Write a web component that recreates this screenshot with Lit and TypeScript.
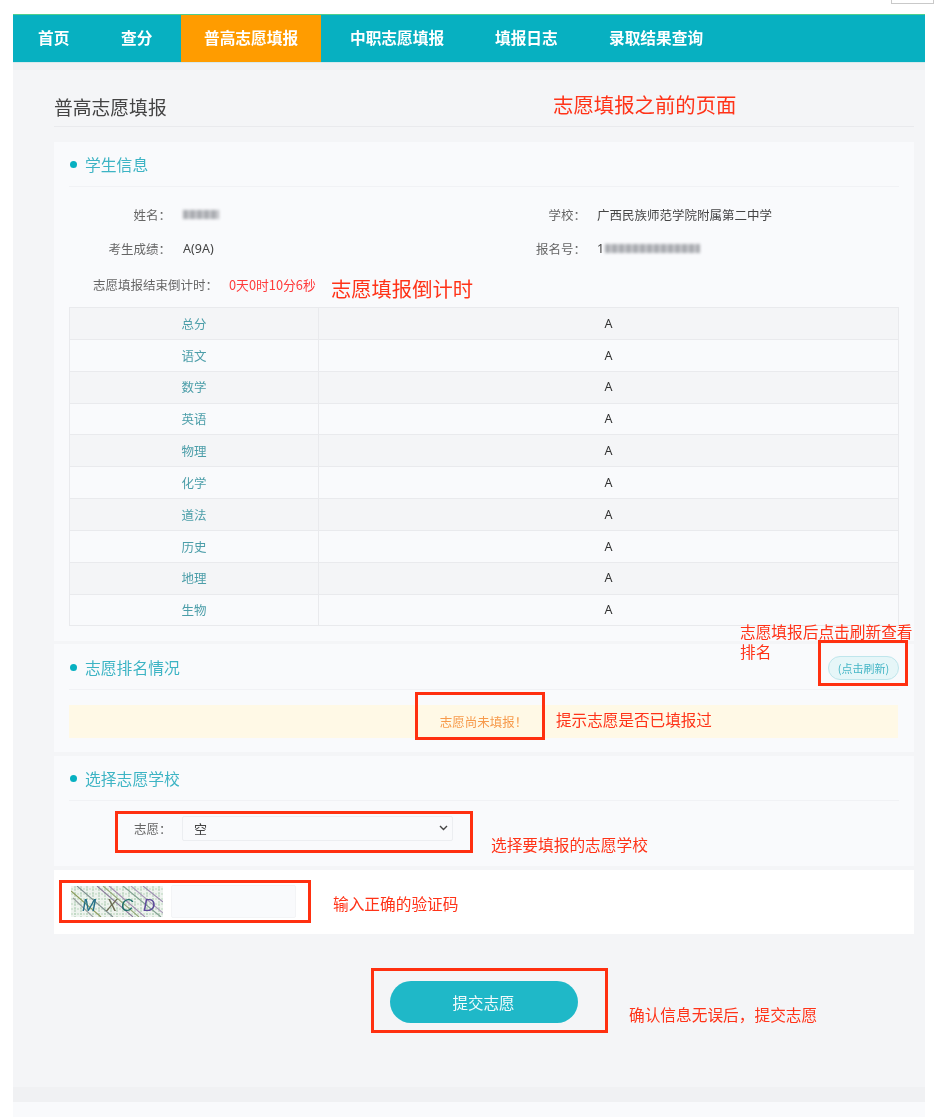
import { LitElement, html, css, svg } from "lit";
import { customElement } from "lit/decorators.js";

const NAV = [
  { t: "首页", w: 83, pad: 25 },
  { t: "查分", w: 85, pad: 25 },
  { t: "普高志愿填报", w: 140, pad: 23, active: true },
  { t: "中职志愿填报", w: 147, pad: 29 },
  { t: "填报日志", w: 114, pad: 27 },
  { t: "录取结果查询", w: 0, pad: 27 },
];
const SUBJECTS = ["总分", "语文", "数学", "英语", "物理", "化学", "道法", "历史", "地理", "生物"];

const NOTES = [
  { t: "志愿填报之前的页面", x: 553, y: 95, s: 20.4 },
  { t: "志愿填报倒计时", x: 331, y: 279, s: 20.3 },
  { t: "志愿填报后点击刷新查看", x: 740, y: 624, s: 15.7 },
  { t: "排名", x: 740, y: 644, s: 15.7 },
  { t: "提示志愿是否已填报过", x: 556, y: 712, s: 15.6 },
  { t: "选择要填报的志愿学校", x: 491, y: 837, s: 15.7 },
  { t: "输入正确的验证码", x: 333, y: 896, s: 15.7 },
  { t: "确认信息无误后，提交志愿", x: 629, y: 1007, s: 15.7 },
];
const BOXES = [
  { x: 415, y: 692, w: 130, h: 48 },
  { x: 818, y: 640, w: 90, h: 46 },
  { x: 115, y: 811, w: 358, h: 42 },
  { x: 59, y: 880, w: 252, h: 43 },
  { x: 371, y: 968, w: 237, h: 65 },
];

@customElement("app-root")
export class AppRoot extends LitElement {
  static styles = css`
    :host {
      display: block;
      position: relative;
      width: 934px;
      height: 1117px;
      overflow: hidden;
      background: #fff;
      font-family: "Noto Sans", "Noto Sans CJK SC", sans-serif;
      font-size: 12.5px;
      color: #333;
      filter: blur(0.35px);
    }
    * { box-sizing: border-box; }
    .corner {
      position: absolute;
      left: 891px;
      top: -1px;
      width: 43px;
      height: 5px;
      border: 1px solid #c9c9c9;
      background: #fff;
    }
    .wrap {
      margin: 14px 0 0 13px;
      width: 912px;
      height: 1103px;
      display: flex;
      flex-direction: column;
      background: #f0f1f3;
    }
    nav {
      height: 48px;
      flex: none;
      display: flex;
      background: #07b0c1;
      border-top: 1px solid #4fcf8c;
      color: #fff;
      font-size: 15.7px;
      font-weight: 700;
      font-family: "Noto Sans CJK SC", sans-serif;
    }
    .nav-item {
      display: flex;
      align-items: center;
      line-height: 1;
      white-space: nowrap;
      padding-bottom: 2px;
    }
    .nav-item.active { background: #ff9c00; }
    .nav-line { height: 1px; background: #d6e9ec; flex: none; }
    main {
      margin-top: 7px;
      flex: none;
      height: 1017px;
      background: #f4f5f7;
      padding: 0 11px 0 41px;
      display: flex;
      flex-direction: column;
    }
    .page-title {
      height: 57px;
      flex: none;
      display: flex;
      align-items: flex-end;
      padding-bottom: 6px;
      font-size: 18.8px;
      line-height: 26px;
      color: #444;
      border-bottom: 1px solid #e9eaed;
      font-family: "Noto Sans CJK SC", sans-serif;
    }
    .panel {
      background: #f9fafc;
      padding: 0 15px;
      flex: none;
    }
    .p1 { margin-top: 15px; height: 499px; }
    .p2 { margin-top: 3px; height: 108px; }
    .p3 { margin-top: 4px; height: 110px; }
    .head {
      height: 45px;
      display: flex;
      align-items: center;
      gap: 8px;
      border-bottom: 1px solid #f1f2f5;
      font-size: 15.8px;
      color: #3db4c4;
      font-family: "Noto Sans CJK SC", sans-serif;
    }
    .p2 .head { height: 46px; padding-top: 2px; }
    .p3 .head { height: 45px; }
    .dot {
      width: 7px;
      height: 7px;
      margin-left: 1px;
      border-radius: 50%;
      background: #07b0c1;
      flex: none;
    }
    .title { flex: 1; }
    .refresh {
      margin: 0;
      width: 71px;
      height: 24px;
      border-radius: 12px;
      border: 1px solid #bfe6ec;
      background: #e6f6f8;
      color: #45b6c6;
      font-size: 11px;
      display: flex;
      align-items: center;
      justify-content: center;
      font-family: "Noto Sans CJK SC", sans-serif;
    }
    .info {
      display: grid;
      grid-template-columns: 1fr 1fr;
      grid-auto-rows: 34px;
      padding-top: 11px;
    }
    .field { display: flex; align-items: center; line-height: 34px; }
    .label {
      color: #666;
      text-align: right;
      white-space: nowrap;
      width: 102px;
      flex: none;
      font-family: "Noto Sans CJK SC", sans-serif;
    }
    .val { margin-left: 12px; white-space: nowrap; color: #444; }
    .right .val { margin-left: 11px; }
    .school { font-family: "Noto Sans CJK SC", sans-serif; }
    .blur {
      display: inline-block;
      height: 9px;
      background: repeating-linear-gradient(90deg, #a9abb0 0 5px, #d0d1d5 5px 7px);
      filter: blur(1.6px);
    }
    .count { display: flex; align-items: center; height: 36px; }
    .count .label { width: 149px; }
    .count .val {
      color: #ff3b3b;
      margin-left: 11px;
      font-size: 12.8px;
      font-family: "Noto Sans CJK SC", sans-serif;
    }
    table {
      width: 830px;
      border-collapse: collapse;
      table-layout: fixed;
      margin-top: 5px;
    }
    td {
      height: 31.85px;
      padding: 1px 0 0;
      border: 1px solid #e9eaed;
      text-align: center;
      font-size: 12.5px;
      line-height: 1;
    }
    td:first-child {
      width: 249px;
      color: #4c9ea9;
      font-family: "Noto Sans CJK SC", sans-serif;
    }
    tr:nth-child(odd) { background: #f4f5f7; }
    .alert {
      margin: 15px 1px 0 0;
      height: 33px;
      background: #fff9e6;
      color: #f79a4b;
      display: flex;
      align-items: center;
      justify-content: center;
      font-family: "Noto Sans CJK SC", sans-serif;
    }
    .pick { display: flex; align-items: center; padding: 15px 0 0 65px; }
    .pick .label { width: 48px; text-align: left; }
    .select-box {
      position: relative;
      width: 271px;
      height: 25px;
    }
    select {
      appearance: none;
      display: block;
      width: 100%;
      height: 100%;
      background: #f9fafc;
      border: 1px solid #eceef1;
      border-radius: 2px;
      font-family: "Noto Sans CJK SC", sans-serif;
      font-size: 13px;
      color: #444;
      padding-left: 11px;
    }
    .chev { position: absolute; right: 5px; top: 9px; display: block; pointer-events: none; }
    .captcha {
      margin-top: 4px;
      height: 64px;
      background: #fff;
      flex: none;
      display: flex;
      align-items: center;
      gap: 8px;
      padding: 0 0 2px 17px;
    }
    .captcha svg { display: block; flex: none; filter: blur(0.35px); }
    .captcha .cap-text { font-family: "Liberation Sans", sans-serif; font-style: italic; font-size: 17px; }
    .code {
      width: 125px;
      height: 33px;
      background: #f9fafc;
      border: 1px solid #f3f4f6;
      border-radius: 2px;
    }
    .actions { display: flex; justify-content: center; padding: 47px 0 0 0; margin-left: -1px; }
    .submit {
      width: 188px;
      height: 42px;
      border-radius: 21px;
      border: none;
      background: #1fb8c8;
      color: #f2fbfc;
      font-size: 15.5px;
      font-family: "Noto Sans CJK SC", sans-serif;
    }
    .bottom { position: absolute; left: 13px; top: 1102px; width: 912px; height: 15px; background: #f9fafc; }
    .note {
      position: absolute;
      color: #ff3318;
      line-height: 1.15;
      white-space: nowrap;
      font-family: "Liberation Sans", "Noto Sans CJK SC", sans-serif;
    }
    .box {
      position: absolute;
      border: 3px solid #ff3010;
    }
  `;

  private captcha() {
    const lines = [];
    for (let x = 4; x < 92; x += 6) lines.push(svg`<line x1=${x} y1="0" x2=${x} y2="31" stroke="#a9c9b0" stroke-width="1" stroke-dasharray="2 1"/>`);
    for (let y = 3; y < 31; y += 5) lines.push(svg`<line x1="0" y1=${y} x2="92" y2=${y} stroke="#b9d6bd" stroke-width="1" stroke-dasharray="2 1"/>`);
    const diag = [
      [0, 5, 30, 31, "#8a9a5a"],
      [2, 12, 22, 31, "#9aa0a0"],
      [6, 0, 42, 31, "#7e8f8f"],
      [26, 0, 62, 31, "#8a7a9a"],
      [32, 0, 68, 31, "#94a878"],
      [38, 0, 74, 31, "#a08ab0"],
      [52, 0, 90, 31, "#7f9f8f"],
      [60, 0, 92, 27, "#a89ab8"],
      [72, 0, 92, 16, "#9a8ab0"],
    ] as const;
    return html`<svg width="92" height="31" viewBox="0 0 92 31" aria-hidden="true">
      <rect width="92" height="31" fill="#eef3ee"/>
      ${lines}
      ${diag.map(d => svg`<line x1=${d[0]} y1=${d[1]} x2=${d[2]} y2=${d[3]} stroke=${d[4]} stroke-width="1.1"/>`)}
      <text class="cap-text" x="11" y="25" fill="#23708a">M</text>
      <text class="cap-text" x="35" y="25" fill="#6d6d55">X</text>
      <text class="cap-text" x="50" y="25" fill="#1f6f6a">C</text>
      <text class="cap-text" x="72" y="25" fill="#5d4a9a">D</text>
    </svg>`;
  }

  render() {
    return html`
      <div class="corner"></div>
      <div class="wrap">
        <nav>
          ${NAV.map(n => html`<div class="nav-item ${n.active ? "active" : ""}"
            style="padding-left:${n.pad}px;${n.w ? `width:${n.w}px` : ""}">${n.t}</div>`)}
        </nav>
        <div class="nav-line"></div>
        <main>
          <div class="page-title">普高志愿填报</div>

          <section class="panel p1">
            <div class="head"><span class="dot"></span><span class="title">学生信息</span></div>
            <div class="info">
              <div class="field"><span class="label">姓名：</span><span class="val"><span class="blur" style="width:36px"></span></span></div>
              <div class="field right"><span class="label">学校：</span><span class="val school">广西民族师范学院附属第二中学</span></div>
              <div class="field"><span class="label">考生成绩：</span><span class="val">A(9A)</span></div>
              <div class="field right"><span class="label">报名号：</span><span class="val">1<span class="blur" style="width:95px;margin-left:1px"></span></span></div>
            </div>
            <div class="count"><span class="label">志愿填报结束倒计时：</span><span class="val">0天0时10分6秒</span></div>
            <table>
              <tbody>
                ${SUBJECTS.map(s => html`<tr><td>${s}</td><td>A</td></tr>`)}
              </tbody>
            </table>
          </section>

          <section class="panel p2">
            <div class="head"><span class="dot"></span><span class="title">志愿排名情况</span><span class="refresh">(点击刷新)</span></div>
            <div class="alert">志愿尚未填报！</div>
          </section>

          <section class="panel p3">
            <div class="head"><span class="dot"></span><span class="title">选择志愿学校</span></div>
            <div class="pick">
              <span class="label">志愿：</span>
              <div class="select-box">
                <select><option>空</option></select>
                <svg class="chev" width="9" height="6" viewBox="0 0 9 6" aria-hidden="true"><path d="M1 1l3.5 3.5L8 1" fill="none" stroke="#444" stroke-width="1.4"/></svg>
              </div>
            </div>
          </section>

          <section class="captcha">
            ${this.captcha()}
            <div class="code"></div>
          </section>

          <div class="actions"><button class="submit">提交志愿</button></div>
        </main>
      </div>
      <div class="bottom"></div>
      ${NOTES.map(n => html`<div class="note" style="left:${n.x}px;top:${n.y}px;font-size:${n.s}px">${n.t}</div>`)}
      ${BOXES.map(b => html`<div class="box" style="left:${b.x}px;top:${b.y}px;width:${b.w}px;height:${b.h}px"></div>`)}
    `;
  }
}
